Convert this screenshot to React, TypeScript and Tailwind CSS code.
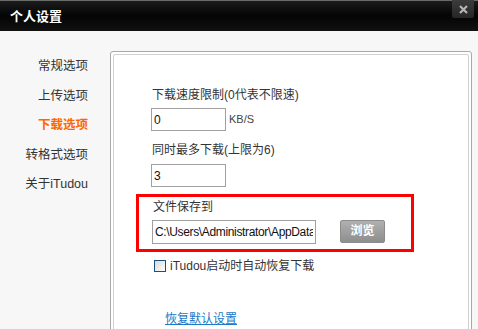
import { useState } from "react";

const menu = ["常规选项", "上传选项", "下载选项", "转格式选项", "关于iTudou"];

export default function App() {
  const [active] = useState("下载选项");
  const [speed, setSpeed] = useState("0");
  const [maxTasks, setMaxTasks] = useState("3");
  const [savePath, setSavePath] = useState("C:\\Users\\Administrator\\AppData\\Roaming");
  const [autoResume, setAutoResume] = useState(false);

  return (
    <div className="w-[478px] h-[329px] overflow-hidden bg-[#f7f7f7] flex flex-col font-['Liberation_Sans','Noto_Sans_CJK_SC',sans-serif] text-[12px] text-[#333]">
      {/* 标题栏 */}
      <div className="h-[31px] shrink-0 flex items-center justify-between bg-gradient-to-b from-[#1c1c1c] via-[#050505] to-[#121212] border-t border-[#6a6a6a]">
        <span className="pl-[10px] text-[13px] font-bold text-white leading-none">个人设置</span>
        <button className="self-start mr-[4px] -mt-px w-[22px] h-[18px] flex items-center justify-center bg-gradient-to-b from-[#3c3c3c] to-[#262626] rounded-b-[2px]">
          <svg width="9" height="9" viewBox="0 0 9 9">
            <path d="M1 1 L8 8 M8 1 L1 8" stroke="#b5b5b5" strokeWidth="2.2" />
          </svg>
        </button>
      </div>

      <div className="flex-1 flex min-h-0">
        {/* 左侧菜单 */}
        <div className="w-[110px] shrink-0 flex flex-col items-end pr-[22px] pt-[21px] text-[12.5px]">
          {menu.map((item) => (
            <div
              key={item}
              className={`h-[29.5px] flex items-center ${
                item === active ? "text-[#ff6600] font-bold" : "text-[#333]"
              }`}
            >
              {item}
            </div>
          ))}
        </div>

        {/* 设置面板 */}
        <div className="flex-1 mr-[6px] mt-[20px] -mb-[10px] border border-[#a8a8a8] rounded-[3px] p-[2px] bg-white">
          <div className="h-full border border-[#d0d0d0] rounded-[2px] pl-[22px] pt-[32px]">
            <div className="pl-[16px] leading-[16px]">下载速度限制(0代表不限速)</div>
            <div className="pl-[15px] mt-[5px] flex items-center gap-[3px]">
              <input
                value={speed}
                onChange={(e) => setSpeed(e.target.value)}
                className="w-[75px] h-[23px] border border-[#a0a0a0] px-[2px] text-[12px] text-[#111] outline-none bg-white"
              />
              <span className="text-[11px] text-[#444]">KB/S</span>
            </div>

            <div className="pl-[16px] mt-[11px] leading-[16px]">同时最多下载(上限为6)</div>
            <div className="pl-[15px] mt-[6px]">
              <input
                value={maxTasks}
                onChange={(e) => setMaxTasks(e.target.value)}
                className="w-[75px] h-[23px] border border-[#a0a0a0] px-[2px] text-[12px] text-[#111] outline-none bg-white"
              />
            </div>

            {/* 文件保存到 */}
            <div className="mt-[7px] w-[278px] border-[3px] border-[#ff0000] pl-[13px] pt-[2px] pb-[5px]">
              <div className="pl-[1px] leading-[16px]">文件保存到</div>
              <div className="mt-[5px] flex items-center gap-[24px]">
                <input
                  value={savePath}
                  onChange={(e) => setSavePath(e.target.value)}
                  className="w-[164px] h-[24px] border border-[#a0a0a0] px-[2px] text-[12px] tracking-[-0.35px] text-[#111] outline-none bg-white"
                />
                <button className="w-[45px] h-[23px] -mt-[2px] rounded-[2px] border border-[#8c8c8c] bg-gradient-to-b from-[#b0b0b0] to-[#8e8e8e] text-white font-bold text-[12px] flex items-center justify-center">
                  浏览
                </button>
              </div>
            </div>

            <label className="mt-[6px] pl-[18px] flex items-center gap-[4px] leading-[16px] cursor-pointer">
              <input
                type="checkbox"
                checked={autoResume}
                onChange={() => setAutoResume(!autoResume)}
                className="appearance-none w-[12px] h-[12px] border border-[#1c4f7c] bg-gradient-to-br from-[#d8d8d8] to-white"
              />
              <span className="text-[#333]">iTudou启动时自动恢复下载</span>
            </label>

            <div className="mt-[36px] pl-[29px]">
              <a href="#" className="text-[#2178c4] underline leading-[16px]">
                恢复默认设置
              </a>
            </div>
          </div>
        </div>
      </div>
    </div>
  );
}
